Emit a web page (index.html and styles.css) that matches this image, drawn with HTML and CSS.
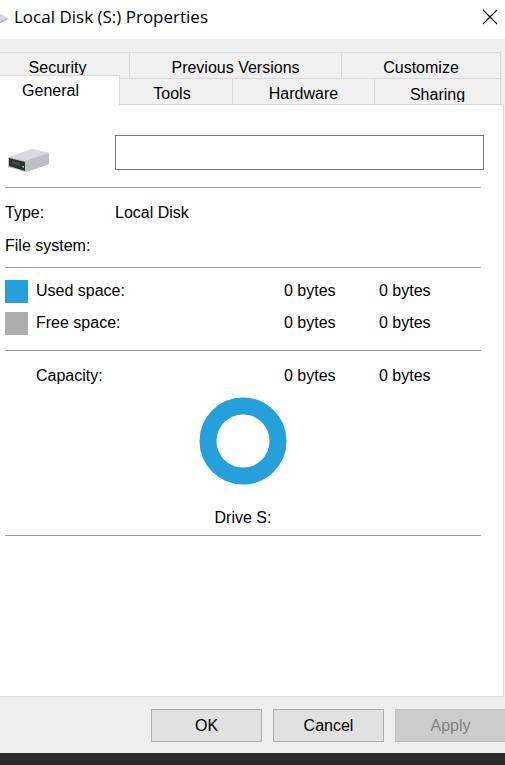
FILE: index.html
```html
<!DOCTYPE html>
<html lang="en">

<head>
    <meta charset="UTF-8">
    <meta name="viewport" content="width=device-width, initial-scale=1">
    <title>Local Disk (S:) Properties</title>
    <link rel="stylesheet" href="styles.css">
</head>

<body>
    <main class="window">
        <header class="titlebar">
            <svg class="title-icon" width="8" height="12" viewBox="0 0 8 12" aria-hidden="true">
                <path d="M0 3 L8 7 L7 9 L0 12 Z" fill="#b4b6ba" />
                <path d="M0 3 L8 7 L0 10 Z" fill="#d5d7da" />
            </svg>
            <h1 class="title">Local Disk (S:) Properties</h1>
            <button class="close" type="button" aria-label="Close">
                <svg width="16" height="16" viewBox="0 0 16 16" aria-hidden="true">
                    <path d="M1 1 L15 15 M15 1 L1 15" stroke="#000" stroke-width="1.1" />
                </svg>
            </button>
        </header>

        <nav class="tabs" role="tablist">
            <div class="tab-row back-row">
                <button class="tab cut" type="button" role="tab">Security</button>
                <button class="tab" type="button" role="tab">Previous Versions</button>
                <button class="tab" type="button" role="tab">Customize</button>
            </div>
            <div class="tab-row front-row">
                <button class="tab cut active" type="button" role="tab" aria-selected="true">General</button>
                <button class="tab tools" type="button" role="tab">Tools</button>
                <button class="tab" type="button" role="tab">Hardware</button>
                <button class="tab" type="button" role="tab"><span class="clip">Sharing</span></button>
            </div>
        </nav>

        <section class="sheet" role="tabpanel">
            <div class="name">
                <svg class="drive" width="42" height="24" viewBox="0 0 42 24" aria-hidden="true">
                    <path d="M0 9 L24 0 L41 4 L41 15 L18 23 L0 17 Z" fill="#b9babd" />
                    <path d="M0 8 L24 0 L41 4 L18 12 Z" fill="#d9dadd" />
                    <path d="M18 12 L41 4 L41 15 L18 23 Z" fill="#bfc0c4" />
                    <path d="M0 8 L18 12 L18 23 L0 18 Z" fill="#c3c5c6" />
                    <path d="M1 9 L17 13 L17 22 L1 17 Z" fill="#2d322f" />
                    <path d="M4 12 L12 14 L12 17 L4 15 Z" fill="#454b49" />
                    <path d="M14 17 L16 17 L16 19 L14 18 Z" fill="#72d878" />
                </svg>
                <input class="label-input" type="text" aria-label="Volume label">
            </div>

            <dl class="info">
                <dt>Type:</dt>
                <dd>Local Disk</dd>
                <dt>File system:</dt>
                <dd></dd>
            </dl>

            <table class="usage">
                <colgroup>
                    <col class="col-key">
                    <col>
                    <col class="col-bytes">
                    <col class="col-size">
                </colgroup>
                <tbody>
                    <tr>
                        <td><span class="key used"></span></td>
                        <th scope="row">Used space:</th>
                        <td>0 bytes</td>
                        <td>0 bytes</td>
                    </tr>
                    <tr>
                        <td><span class="key free"></span></td>
                        <th scope="row">Free space:</th>
                        <td>0 bytes</td>
                        <td>0 bytes</td>
                    </tr>
                </tbody>
            </table>

            <table class="usage total">
                <colgroup>
                    <col class="col-key">
                    <col>
                    <col class="col-bytes">
                    <col class="col-size">
                </colgroup>
                <tbody>
                    <tr>
                        <td></td>
                        <th scope="row">Capacity:</th>
                        <td>0 bytes</td>
                        <td>0 bytes</td>
                    </tr>
                </tbody>
            </table>

            <figure class="chart">
                <svg width="88" height="88" viewBox="0 0 88 88" aria-hidden="true">
                    <circle cx="44" cy="44" r="35" fill="none" stroke="#26a0da" stroke-width="17" />
                </svg>
                <figcaption>Drive S:</figcaption>
            </figure>
        </section>

        <footer class="buttons">
            <button class="button" type="button">OK</button>
            <button class="button" type="button">Cancel</button>
            <button class="button" type="button" disabled>Apply</button>
        </footer>
    </main>
</body>

</html>
```
FILE: styles.css
```css
* {
    box-sizing: border-box;
    padding: 0;
    margin: 0;
}

body {
    min-height: 100vh;
    display: flex;
    flex-direction: column;
    background: #2b2b2b;
    color: #000;
    font-family: "Liberation Sans", Arial, sans-serif;
    font-size: 16px;
    line-height: 20px;
    overflow-x: hidden;
}

button,
input {
    font: inherit;
    color: inherit;
}

.window {
    flex: 1;
    display: flex;
    flex-direction: column;
    margin-bottom: 12px;
    background: #efefef;
}

.titlebar {
    height: 39px;
    display: flex;
    align-items: center;
    padding: 0 7px 6px 0;
    background: #fff;
}

.title-icon {
    margin-right: 6px;
}

.title {
    flex: 1;
    font-family: "Open Sans", "Segoe UI", sans-serif;
    font-size: 17px;
    font-weight: normal;
}

.close {
    display: flex;
    background: none;
    border: none;
}

/* tabs */
.tabs {
    padding: 13px 4px 0 0;
}

.tab-row {
    display: grid;
    height: 26px;
    border-top: #d9d9d9 solid 1px;
}

.back-row {
    grid-template-columns: 130fr 212fr 159fr;
}

.front-row {
    grid-template-columns: 120fr 113fr 142fr 126fr;
}

.tab {
    padding-top: 4px;
    background: #f0f0f0;
    border: none;
    border-right: #d9d9d9 solid 1px;
}

/* the left edge of these runs out of the window */
.cut {
    padding-right: 14px;
}

.tools {
    padding-right: 8px;
}

.active {
    position: relative;
    margin: -4px 0 -1px;
    padding-top: 0;
    padding-right: 18px;
    background: #fff;
    border-top: #d9d9d9 solid 1px;
}

.clip {
    display: block;
    height: 16px;
    line-height: 17px;
    overflow: hidden;
}

/* sheet */
.sheet {
    flex: 1;
    margin-right: 1px;
    padding: 30px 22px 0 5px;
    background: #fff;
    border: #d9d9d9 solid 1px;
    border-left: none;
}

.name {
    display: flex;
    padding-bottom: 17px;
    border-bottom: #a0a0a0 solid 1px;
}

.drive {
    flex: none;
    align-self: flex-end;
    margin: 0 65px -3px 3px;
}

.label-input {
    flex: 1;
    min-width: 0;
    height: 35px;
    margin-right: -3px;
    padding: 0 6px;
    background: #fff;
    border: #7a7a7a solid 1px;
}

.info {
    display: grid;
    grid-template-columns: 110px 1fr;
    grid-auto-rows: 33px;
    align-items: center;
    padding: 8px 0 5px;
    border-bottom: #a0a0a0 solid 1px;
}

.usage {
    width: 100%;
    table-layout: fixed;
    border-spacing: 0;
    padding: 7px 0 11px;
    border-bottom: #a0a0a0 solid 1px;
}

.usage tr {
    height: 32px;
}

.usage th {
    font-weight: normal;
    text-align: left;
}

.col-key {
    width: 31px;
}

.col-bytes {
    width: 95px;
}

.col-size {
    width: 102px;
}

.total {
    padding: 9px 0 5px;
    border-bottom: none;
}

.key {
    display: block;
    width: 23px;
    height: 23px;
}

.used {
    background: #26a0da;
}

.free {
    background: #adadad;
}

.chart {
    display: flex;
    flex-direction: column;
    align-items: center;
    gap: 23px;
    padding-bottom: 7px;
    border-bottom: #a0a0a0 solid 1px;
}

/* buttons */
.buttons {
    display: flex;
    justify-content: flex-end;
    gap: 11px;
    margin-right: -1px;
    padding: 12px 0 11px;
}

.button {
    width: 111px;
    height: 33px;
    background: #e1e1e1;
    border: #adadad solid 1px;
}

.button:disabled {
    background: #ccc;
    border-color: #bfbfbf;
    color: #838383;
}
```
